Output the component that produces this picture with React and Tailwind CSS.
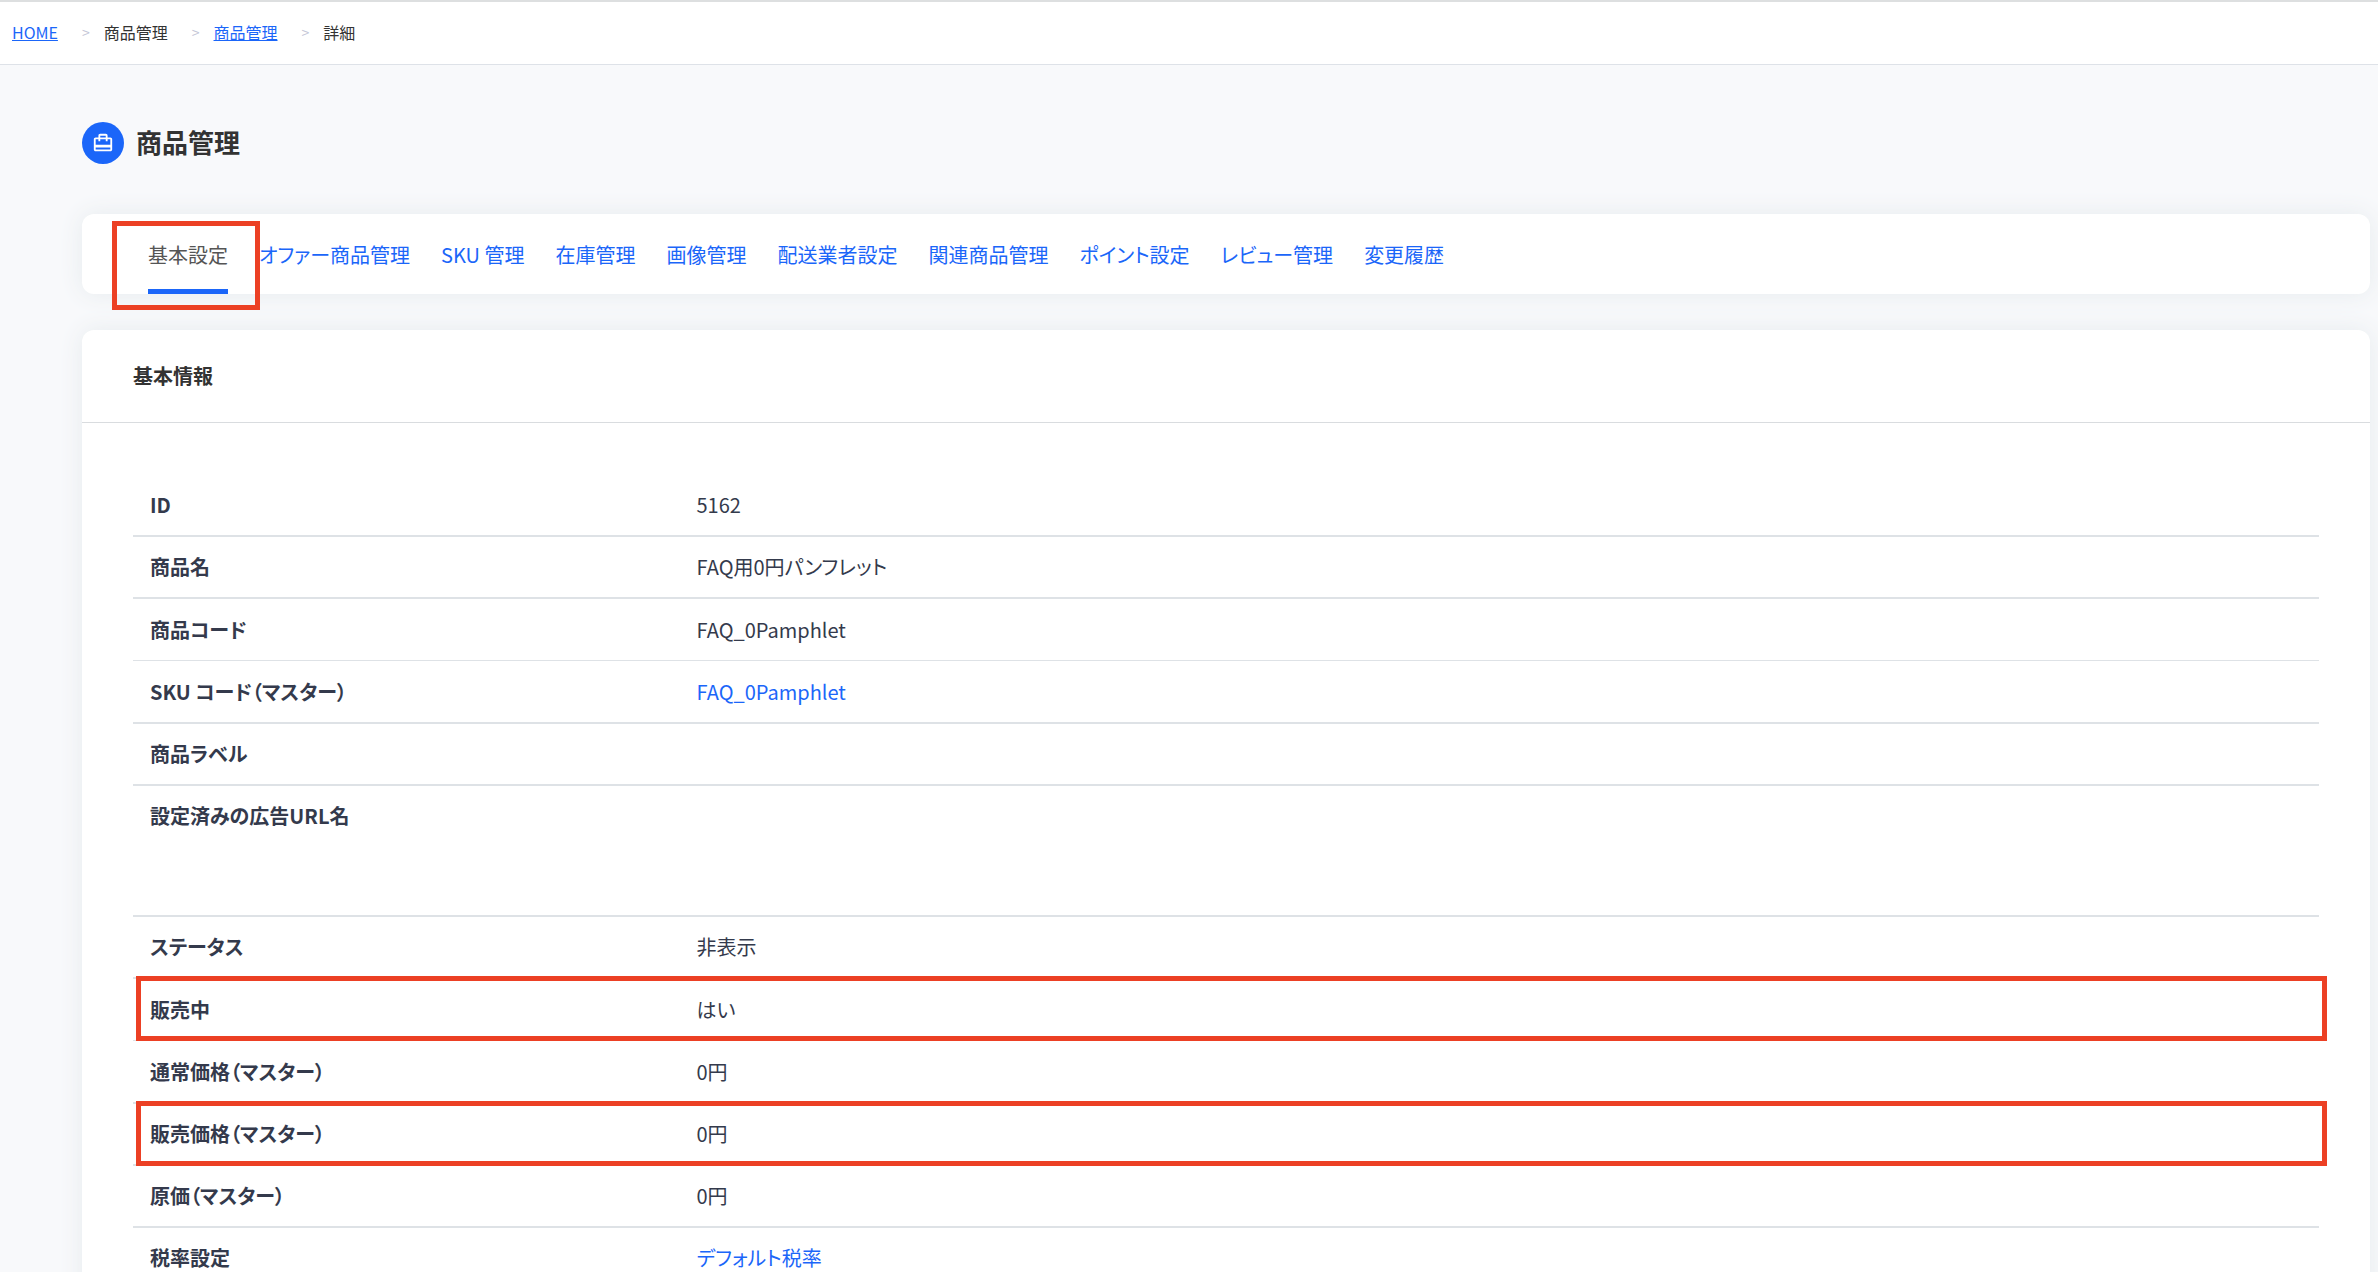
import React from "react";
import { MdOutlineCardTravel } from "react-icons/md";

const crumbs = [
  { label: "HOME", link: true },
  { label: "商品管理" },
  { label: "商品管理", link: true },
  { label: "詳細" },
];

const tabs = [
  "基本設定",
  "オファー商品管理",
  "SKU 管理",
  "在庫管理",
  "画像管理",
  "配送業者設定",
  "関連商品管理",
  "ポイント設定",
  "レビュー管理",
  "変更履歴",
];

const rows = [
  { label: "ID", value: "5162" },
  { label: "商品名", value: "FAQ用0円パンフレット" },
  { label: "商品コード", value: "FAQ_0Pamphlet", thin: true },
  { label: "SKU コード（マスター）", value: "FAQ_0Pamphlet", link: true, roomy: true },
  { label: "商品ラベル", value: "" },
  { label: "設定済みの広告URL名", value: "", tall: true },
  { label: "ステータス", value: "非表示" },
  { label: "販売中", value: "はい", thin: true, marked: true },
  { label: "通常価格（マスター）", value: "0円", roomy: true },
  { label: "販売価格（マスター）", value: "0円", marked: true },
  { label: "原価（マスター）", value: "0円" },
  { label: "税率設定", value: "デフォルト税率", link: true },
];

function Breadcrumbs() {
  return (
    <nav aria-label="パンくず" className="border-t-2 border-b border-t-[#dddfe0] border-b-[#dee2e8] bg-white">
      <ol className="flex h-[62px] items-center px-3 pb-0.5 text-[16px] text-[#333]">
        {crumbs.map((c, i) => (
          <li key={i} className="flex items-center">
            {i > 0 && (
              <span aria-hidden="true" className="mr-3.5 ml-6 text-[14px] text-[#c3c5d6]">
                &gt;
              </span>
            )}
            {c.link ? (
              <a href="#" className="text-[#1b66f9] underline">
                {c.label}
              </a>
            ) : (
              <span>{c.label}</span>
            )}
          </li>
        ))}
      </ol>
    </nav>
  );
}

function Tabs() {
  return (
    <nav className="rounded-xl bg-white px-[66px] shadow-[0_0_24px_#e6ebee]">
      <ul className="flex h-20 gap-[31px]">
        {tabs.map((t, i) => (
          <li key={t} className="relative flex">
            <a
              href="#"
              aria-current={i === 0 ? "page" : undefined}
              className={
                i === 0
                  ? "flex items-center border-b-[5px] border-[#1b66f9] pt-[7px] text-[#555]"
                  : "flex items-center pt-0.5 text-[#1b66f9]"
              }
            >
              {t}
            </a>
            {i === 0 && (
              <span className="pointer-events-none absolute top-[7px] -right-8 -bottom-4 -left-9 border-[5px] border-[#ec4024]" />
            )}
          </li>
        ))}
      </ul>
    </nav>
  );
}

function Row({ row }) {
  const height = row.tall ? "h-[131px] align-top" : row.roomy ? "h-[63px]" : "h-[62px]";
  const border = row.thin ? "border-b" : "border-b-2";
  const cell = `${height} ${border} border-[#dee2e6] px-[17px] py-4 text-left`;
  return (
    <tr className="relative">
      <th scope="row" className={`${cell} w-1/4 font-bold`}>
        {row.label}
        {row.marked && (
          <span className="pointer-events-none absolute -top-[3px] -right-2 bottom-0 left-[3px] border-[5px] border-[#ec4024]" />
        )}
      </th>
      <td className={cell}>
        {row.link ? (
          <a href="#" className="text-[#1b66f9]">
            {row.value}
          </a>
        ) : (
          row.value
        )}
      </td>
    </tr>
  );
}

export default function App() {
  return (
    <div
      lang="ja"
      className="h-screen overflow-hidden bg-[#f8f9fb] font-['Noto_Sans_CJK_JP',sans-serif] text-[20px] leading-7 [font-feature-settings:'palt']"
    >
      <Breadcrumbs />
      <main className="pt-[57px] pr-2 pl-[82px]">
        <div className="flex items-center gap-3">
          <span className="flex size-[42px] items-center justify-center rounded-full bg-[#1b66f9] text-white">
            <MdOutlineCardTravel size={22} />
          </span>
          <h1 className="pb-0.5 text-[26px] font-bold text-[#333]">商品管理</h1>
        </div>

        <div className="mt-[50px] flex flex-col gap-9">
          <Tabs />
          <section className="rounded-xl bg-white shadow-[0_0_24px_#e6ebee]">
            <h2 className="flex h-[93px] items-center border-b border-[#d9dcdf] px-[51px] font-bold text-[#333]">
              基本情報
            </h2>
            <div className="px-[51px] py-[52px]">
              <table className="w-full table-fixed border-separate border-spacing-0 text-[#343a4c]">
                <tbody>
                  {rows.map((r) => (
                    <Row key={r.label} row={r} />
                  ))}
                </tbody>
              </table>
            </div>
          </section>
        </div>
      </main>
    </div>
  );
}
